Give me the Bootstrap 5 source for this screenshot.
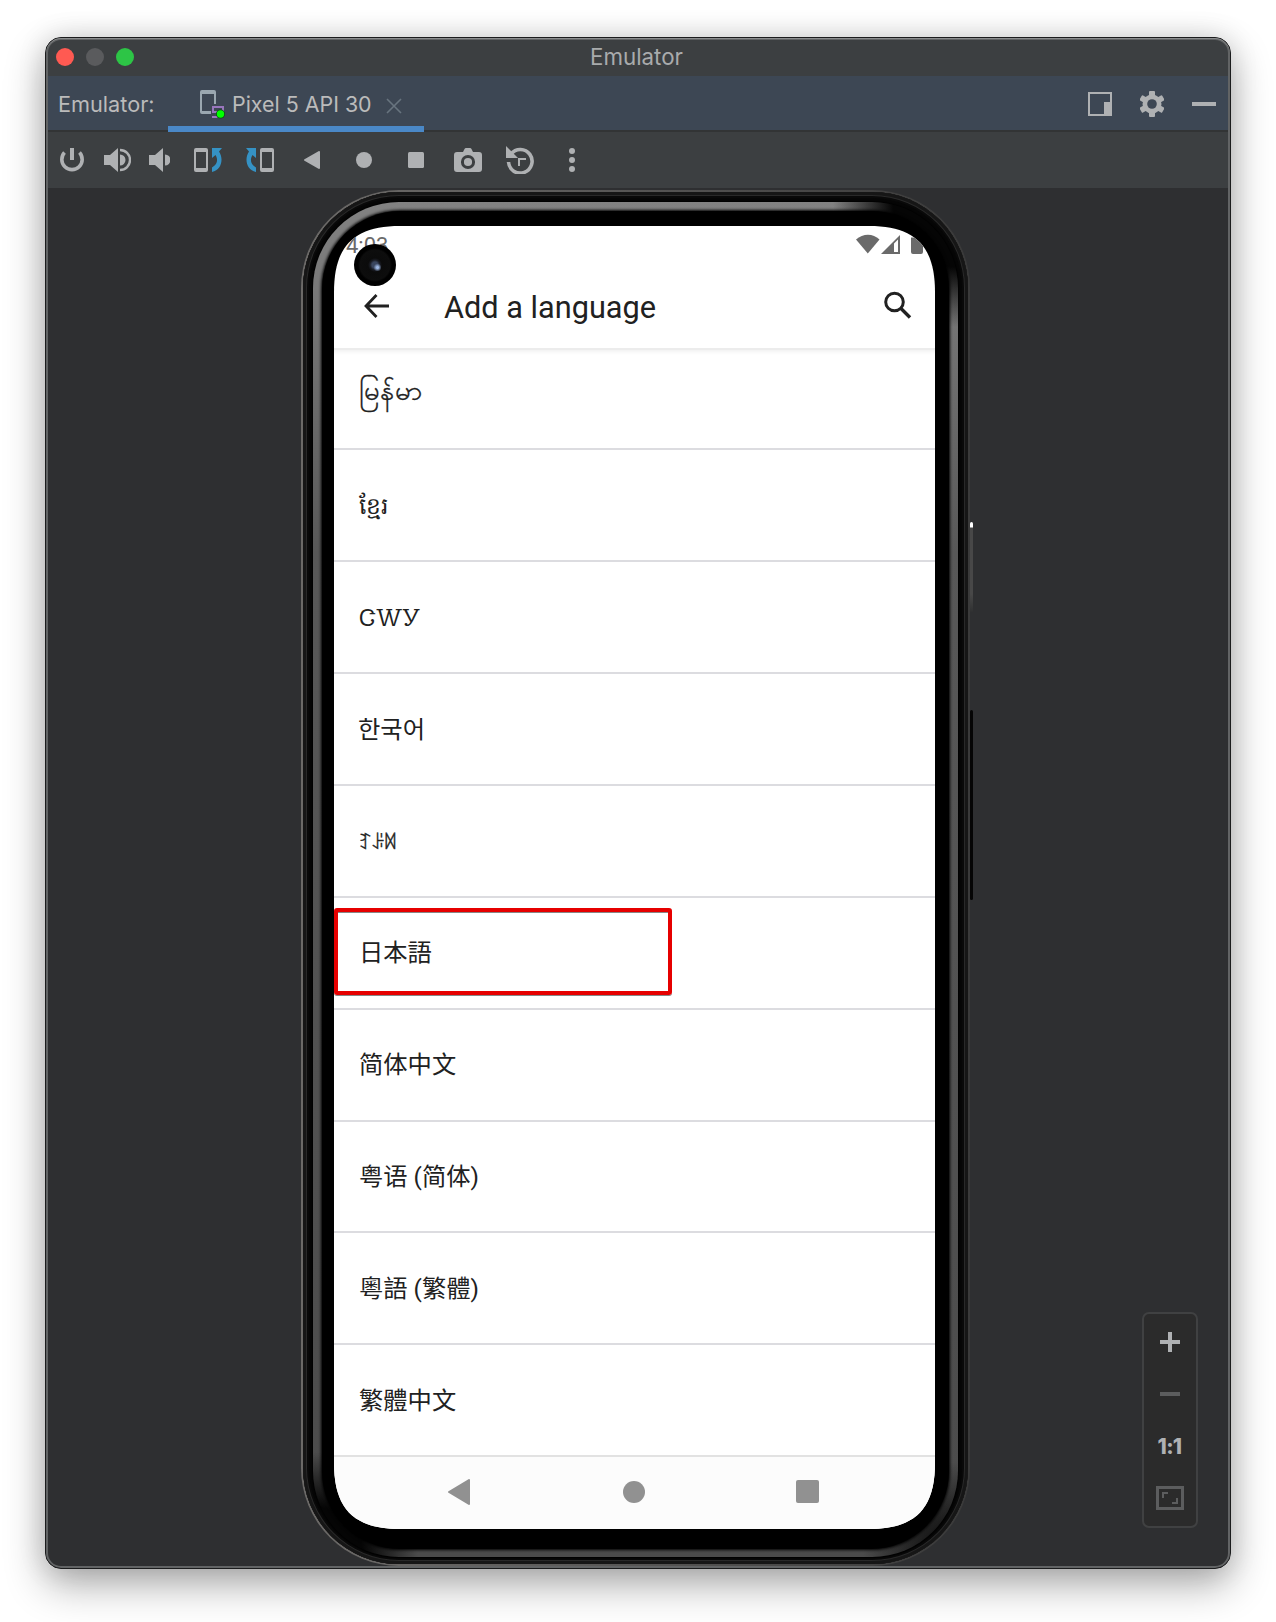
<!DOCTYPE html>
<html lang="en">
<head>
<meta charset="utf-8">
<title>Emulator</title>
<link href="https://cdn.jsdelivr.net/npm/bootstrap@5.3.0/dist/css/bootstrap.min.css" rel="stylesheet">
<style>
body{background:#fff;padding:37px 45px 53px;font-family:Inter,"Liberation Sans",sans-serif;color:#bbb}
svg{display:block;flex:none}
.win{width:1186px;height:1532px;border:1px solid #1b1c1d;border-radius:16px;background:#2e2f31;overflow:hidden}
.win-shadow{width:1186px;border-radius:16px;box-shadow:0 16px 40px rgba(0,0,0,.32),0 0 28px rgba(0,0,0,.13)}
.win::after{content:"";position:absolute;inset:0;border-radius:15px;box-shadow:inset 0 1px 0 #8b8d8e,inset 0 0 0 2px #626465;pointer-events:none}
.titlebar{height:38px;background:#3c3f41;padding-left:10px}
.win-title{font-size:22.300px;color:#a9abac;line-height:38px;top:0;left:0;right:3px}
.dot{width:18px;height:18px;border-radius:50%}
.dot-close{background:#ff5a52}.dot-min{background:#5a5b5d}.dot-max{background:#2dc546}
.tabs-bar{height:56px;background:#3d4754;border-bottom:2px solid #323435;padding-left:12px}
.lbl{font-size:21.700px;line-height:56px;color:#bbb;white-space:nowrap;width:97px}
.tab-item{width:256px;height:56px;border-bottom:6px solid #4a88c7;margin-left:13px;padding:5px 0 0 31px}
.tab-name{font-size:21.400px;line-height:50px;color:#bbb;white-space:nowrap;width:140px}
.tools{height:56px;background:#3c3f41;padding-left:4px}
.tool{height:56px;display:flex;align-items:center;justify-content:center;flex:none}
.stage{height:1380px;padding:2px 0 0 255px}
.phone{width:669px;height:1376px;padding:2px;border-radius:98px;background:linear-gradient(90deg,#6c6a68,#5c5b5a 40%,#3a3a3a 100%)}
.rim{padding:10px 10px 7px;border-radius:96px;background:#060606;box-shadow:inset 0 0 0 3px #161616,inset 0 0 0 4px #292929,inset 0 0 0 6px #090909}
.ring{padding:9px 9px 8px;border-radius:86px;background:
 radial-gradient(circle at 100% 0,#050505 0 65px,transparent 125px),
 radial-gradient(circle at 0 100%,#050505 0 50px,transparent 105px),
 radial-gradient(circle at 100% 100%,#111 0 25px,transparent 95px),
 linear-gradient(180deg,#828282 0,#777 100px,#585858 350px,#4b4b4b 100%);box-shadow:0 0 2px 1px #000}
.bezel{padding:15px 14px 20px 12px;border-radius:78px;background:#000;box-shadow:0 0 3px 1px #000}
.screen{width:601px;height:1303px;background:#fff;clip-path:path("M0 66C0 20 20 0 66 0H535C581 0 601 20 601 66V1237C601 1283 581 1303 535 1303H66C20 1303 0 1283 0 1237Z");color:#212121;font-family:Roboto,"Noto Sans CJK JP",sans-serif}
.status{height:36px;padding:0 11px 0 12px;color:#6a6a6a;font-size:22px}
.status span{line-height:38px;padding-top:3px}
.appbar{height:86px;padding:2px 22px 0 27px}
.appbar h1{font-size:30.700px;font-weight:400;line-height:36px;margin:3px 0 0 53px}
.langs{border-top:2px solid #ececec;box-shadow:inset 0 5px 5px -4px rgba(0,0,0,.08)}
.langs li{height:111.880px;border-bottom:2px solid #dcdce0;padding:1px 0 0 25px;font-size:24.300px;line-height:36px;display:flex;align-items:center}
.langs li:first-child{height:100.300px;padding-bottom:18px;font-size:27.500px;-webkit-text-stroke:.3px #212121}
.langs li:last-child{height:109.700px;border:0}
.langs [lang=km]{font-size:23.300px;padding-top:2px}
.langs [lang=chr]{font-family:"Noto Sans Cherokee","Noto Serif",serif;font-size:24px;padding:0 0 0 24.500px}
.langs [lang=ko]{font-family:"Noto Sans CJK KR",sans-serif;padding:0 0 2px 24px}
.langs [lang=ii]{font-size:18.500px;letter-spacing:-1.300px;padding:4px 0 0 24px;-webkit-text-stroke:.4px #212121}
.langs [lang$=Hans]{font-family:Roboto,"Noto Sans CJK SC",sans-serif}
.langs [lang$=Hant]{font-family:Roboto,"Noto Sans CJK TC",sans-serif}
.navkeys{height:74px;background:#fcfcfc;border-top:2px solid #e2e2e2;padding:0 88px 2px 114px}
.cam{left:19.500px;top:18px;width:42px;height:42px;border-radius:50%;background:radial-gradient(circle at 56% 56%,#9db7e4 0 1px,transparent 4px),radial-gradient(circle at 50% 50%,#3a465f 0 3px,#1a1c24 5px,#0b0b0b 7px,#0d0d0d 15px,#000 17px)}
.pick{left:0;top:682px;width:338px;height:87px;border:4px solid #e60000;border-radius:3px;box-shadow:0 1px 0 #888,inset 0 1px 0 #888}
.power-key{left:924px;top:334px;width:3px;height:90px;background:linear-gradient(#fff 0 5px,#484848 6px,#484848 80%,#303132);border-radius:2px}
.volume-key{left:924px;top:522px;width:3px;height:190px;background:#050505;border-radius:2px}
.zoomer{right:32px;bottom:40px;width:56px;height:216px;border:2px solid #404142;border-radius:7px;background:#2b2b2b;padding-top:2px}
.zoomer>div{height:52px;display:flex;align-items:center;justify-content:center}
.one-one{font:800 21px/1 Inter,sans-serif;letter-spacing:-.7px;color:#afb1b3;padding-right:1px}
</style>
<script src="https://cdn.jsdelivr.net/npm/bootstrap@5.3.0/dist/js/bootstrap.bundle.min.js"></script>
</head>
<body>
<div class="win-shadow">
<main class="win position-relative">
  <header class="titlebar position-relative d-flex align-items-center gap-2">
    <span class="dot dot-close me-1"></span><span class="dot dot-min me-1"></span><span class="dot dot-max"></span>
    <span class="win-title position-absolute text-center">Emulator</span>
  </header>
  <div class="tabs-bar d-flex">
    <div class="lbl">Emulator:</div>
    <div class="tab-item d-flex align-items-center">
      <svg width="28" height="32" viewBox="0 0 28 32" style="margin:3px 5px 0 0"><path d="M1 3a2 2 0 0 1 2-2h12a2 2 0 0 1 2 2v12h-2V5H3v17h9v3H3a2 2 0 0 1-2-2z" fill="#9aa7b0"/><path d="M14 18h10v6M14 17v6h7M13 28h6" fill="none" stroke="#9876bd" stroke-width="2"/><circle cx="21.500" cy="25" r="4.500" fill="#0b4a12"/><circle cx="21.500" cy="25" r="3.700" fill="#00ff00"/></svg>
      <div class="tab-name">Pixel 5 API 30</div>
      <svg width="16" height="16" viewBox="0 0 16 16" style="margin:4px 0 0 14px"><path d="M1 1l14 14M15 1L1 15" stroke="#68747f" stroke-width="1.600"/></svg>
    </div>
    <div class="d-flex align-items-center ms-auto" style="gap:28px;padding:2px 14px 0 0;height:54px">
      <svg width="24" height="24" viewBox="0 0 24 24"><path fill="#afb1b3" fill-rule="evenodd" d="M0 0h24v24H0zM2 2v20h14V10h6V2z"/></svg>
      <svg width="24" height="26" viewBox="0 0 24 26"><g fill="#afb1b3"><rect x="9" y="0" width="6" height="26" rx="1"/><rect x="9" y="0" width="6" height="26" rx="1" transform="rotate(60 12 13)"/><rect x="9" y="0" width="6" height="26" rx="1" transform="rotate(120 12 13)"/><circle cx="12" cy="13" r="9.500"/></g><circle cx="12" cy="13" r="4.800" fill="#3d4754"/></svg>
      <svg width="24" height="4"><path d="M0 0h24v4H0z" fill="#afb1b3"/></svg>
    </div>
  </div>
  <div class="tools d-flex">
    <div class="tool" style="width:44px"><svg width="26" height="26" viewBox="0 0 26 26" fill="none" stroke="#afb1b3" stroke-width="3.600"><path d="M5.500 5.500A10.200 10.200 0 1 0 20.500 5.500"/><path d="M13 1v12" stroke-width="4"/></svg></div>
    <div class="tool" style="width:45px"><svg width="28" height="26" viewBox="0 0 28 26" fill="#afb1b3"><path d="M1 8h6l8-7v24l-8-7H1zM17 7.500a5.500 5.500 0 0 1 0 11z"/><path d="M17 3a10 10 0 0 1 0 20" fill="none" stroke="#afb1b3" stroke-width="2.400"/></svg></div>
    <div class="tool" style="width:43px;padding-right:3px"><svg width="22" height="26" viewBox="0 0 22 26" fill="#afb1b3"><path d="M1 8h6l8-7v24l-8-7H1zM17 7.500a5.500 5.500 0 0 1 0 11z"/></svg></div>
    <div class="tool" style="width:52px"><svg width="28" height="26" viewBox="0 0 28 26"><path fill="#afb1b3" fill-rule="evenodd" d="M2 1h10q2 0 2 2v20q0 2-2 2H2q-2 0-2-2V3q0-2 2-2zM2 5v16h10V5z"/><path fill="#3592c4" d="M18 1h10l-3 3.500C30 12 27.500 23 18 25v-4.500C24 17 24 12 21.500 8L18 11z"/></svg></div>
    <div class="tool" style="width:52px"><svg width="28" height="26" viewBox="0 0 28 26"><g transform="matrix(-1 0 0 1 28 0)"><path fill="#afb1b3" fill-rule="evenodd" d="M2 1h10q2 0 2 2v20q0 2-2 2H2q-2 0-2-2V3q0-2 2-2zM2 5v16h10V5z"/><path fill="#3592c4" d="M18 1h10l-3 3.500C30 12 27.500 23 18 25v-4.500C24 17 24 12 21.500 8L18 11z"/></g></svg></div>
    <div class="tool" style="width:52px"><svg width="16" height="18" viewBox="0 0 16 18"><path d="M1 9L15 1v16z" fill="#afb1b3" stroke="#afb1b3" stroke-width="2" stroke-linejoin="round"/></svg></div>
    <div class="tool" style="width:52px"><svg width="16" height="16"><circle cx="8" cy="8" r="8" fill="#afb1b3"/></svg></div>
    <div class="tool" style="width:52px"><svg width="16" height="16"><rect width="16" height="16" rx="1.500" fill="#afb1b3"/></svg></div>
    <div class="tool" style="width:52px"><svg width="28" height="26" viewBox="0 0 28 26"><path d="M3 5h6l1.500-3q.5-1 1.500-1h4q1 0 1.500 1L19 5h6q3 0 3 3v14q0 3-3 3H3q-3 0-3-3V8q0-3 3-3z" fill="#afb1b3"/><circle cx="14" cy="15" r="5.600" fill="#afb1b3" stroke="#3c3f41" stroke-width="3"/></svg></div>
    <div class="tool" style="width:52px"><svg width="28" height="28" viewBox="0 0 28 28"><path d="M5 8A11.800 11.800 0 1 1 2.500 16" fill="none" stroke="#afb1b3" stroke-width="3.600"/><path d="M0 0v12h12z" fill="#afb1b3"/><path d="M13 20v-7h7" fill="none" stroke="#afb1b3" stroke-width="2"/></svg></div>
    <div class="tool" style="width:52px"><svg width="6" height="26" fill="#afb1b3"><circle cx="3" cy="4" r="3"/><circle cx="3" cy="13" r="3"/><circle cx="3" cy="22" r="3"/></svg></div>
  </div>
  <section class="stage position-relative">
    <div class="phone"><div class="rim"><div class="ring"><div class="bezel">
      <div class="screen position-relative">
        <div class="status d-flex align-items-center justify-content-between"><span>4:03</span>
          <svg width="68" height="22" viewBox="0 0 68 22" fill="#6a6a6a"><path d="M0 6.500C7 0 17 0 23.500 6.500L11.800 20.500z"/><path fill-rule="evenodd" d="M25 21L44 2v19zM38 10.500v8.500h4V6.500z"/><path d="M55 4.500h3V2h6v2.500h3V19q0 2-2 2h-8q-2 0-2-2z"/></svg>
        </div>
        <div class="appbar d-flex align-items-center">
          <svg width="30" height="26" viewBox="0 0 30 26" fill="none" stroke="#212121" stroke-width="2.800" style="margin-top:-1px"><path d="M15.500 2L5 13l10.500 11M5 13h23"/></svg>
          <h1>Add a language</h1>
          <svg width="30" height="28" viewBox="0 0 30 28" fill="none" stroke="#212121" class="ms-auto" style="margin-top:-3px"><circle cx="11.500" cy="11" r="8.800" stroke-width="3"/><path d="M18 17.500l9 9" stroke-width="3.400"/></svg>
        </div>
        <ul class="langs list-unstyled mb-0">
          <li lang="my">မြန်မာ</li>
          <li lang="km">ខ្មែរ</li>
          <li lang="chr">ᏣᎳᎩ</li>
          <li lang="ko">한국어</li>
          <li lang="ii">ꆈꌠꉙ</li>
          <li lang="ja">日本語</li>
          <li lang="zh-Hans">简体中文</li>
          <li lang="yue-Hans">粤语 (简体)</li>
          <li lang="yue-Hant">粵語 (繁體)</li>
          <li lang="zh-Hant">繁體中文</li>
        </ul>
        <div class="navkeys d-flex align-items-center justify-content-between">
          <svg width="22" height="26" viewBox="0 0 22 26"><path d="M1 13L21 1v24z" fill="#919191" stroke="#919191" stroke-width="2" stroke-linejoin="round"/></svg>
          <svg width="24" height="22"><circle cx="13" cy="11" r="11" fill="#919191"/></svg>
          <svg width="51" height="23"><rect width="23" height="23" rx="2" fill="#919191"/></svg>
        </div>
        <div class="cam position-absolute"></div>
        <div class="pick position-absolute"></div>
      </div>
    </div></div></div></div>
    <div class="power-key position-absolute"></div>
    <div class="volume-key position-absolute"></div>
  </section>
  <aside class="zoomer position-absolute">
    <div><svg width="20" height="20"><path d="M8 0h4v8h8v4h-8v8H8v-8H0V8h8z" fill="#afb1b3"/></svg></div>
    <div><svg width="20" height="4"><path d="M0 0h20v4H0z" fill="#5c5d5e"/></svg></div>
    <div><span class="one-one">1:1</span></div>
    <div><svg width="28" height="24" viewBox="0 0 28 24" fill="none" stroke="#5c5d5e"><rect x="1.500" y="1.500" width="25" height="21" stroke-width="3"/><path d="M7 12V7h5M21 12v5h-5" stroke-width="2"/></svg></div>
  </aside>
</main>
</div>
</body>
</html>
